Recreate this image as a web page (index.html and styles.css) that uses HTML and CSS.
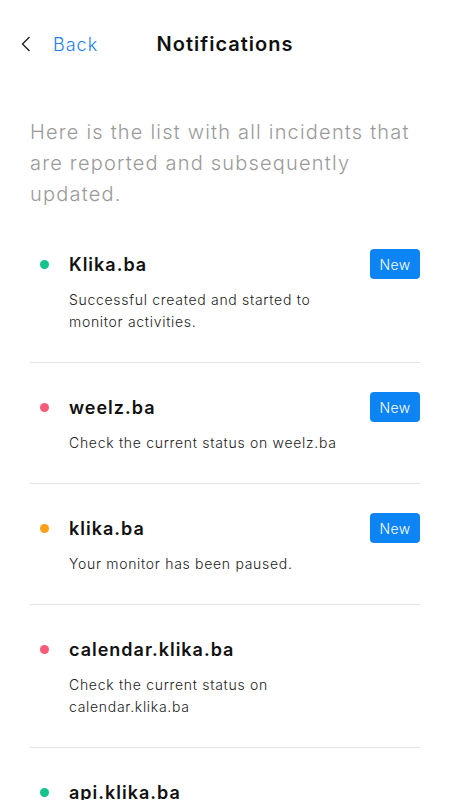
FILE: index.html
```html
<!DOCTYPE html>
<html lang="en">
<head>
<meta charset="utf-8">
<title>Notifications</title>
<link rel="stylesheet" href="styles.css">
</head>
<body>
<header class="topbar">
  <a class="back" href="#">
    <svg class="chev" width="10" height="16" viewBox="0 0 10 16"><path d="M8.5 1 L1.5 8 L8.5 15" fill="none" stroke="#222" stroke-width="1.4"/></svg>
    <span class="back-label">Back</span>
  </a>
  <h1 class="title">Notifications</h1>
  <span></span>
</header>
<p class="intro">Here is the list with all incidents that<br>are reported and subsequently<br>updated.</p>
<ul class="list">
  <li class="item">
    <div class="item-head"><span class="dot green"></span><span class="name">Klika.ba</span><span class="badge">New</span></div>
    <p class="desc">Successful created and started to<br>monitor activities.</p>
  </li>
  <li class="item">
    <div class="item-head"><span class="dot red"></span><span class="name">weelz.ba</span><span class="badge">New</span></div>
    <p class="desc">Check the current status on weelz.ba</p>
  </li>
  <li class="item">
    <div class="item-head"><span class="dot orange"></span><span class="name">klika.ba</span><span class="badge">New</span></div>
    <p class="desc">Your monitor has been paused.</p>
  </li>
  <li class="item">
    <div class="item-head"><span class="dot red"></span><span class="name">calendar.klika.ba</span></div>
    <p class="desc">Check the current status on<br>calendar.klika.ba</p>
  </li>
  <li class="item">
    <div class="item-head"><span class="dot green"></span><span class="name">api.klika.ba</span></div>
    <p class="desc">Check the current status on api.klika.ba</p>
  </li>
</ul>
</body>
</html>
```
FILE: styles.css
```css
* { box-sizing: border-box; }
html, body { margin: 0; padding: 0; background: #fff; }
body {
  font-family: Inter, "Open Sans", "DejaVu Sans", sans-serif;
  color: #111;
  width: 450px;
  height: 800px;
  overflow: hidden;
}
.topbar {
  height: 88px;
  display: grid;
  grid-template-columns: 1fr auto 1fr;
  align-items: center;
}
.back {
  display: flex;
  align-items: center;
  text-decoration: none;
  padding-left: 21px;
}
.chev { display: block; }
.back-label {
  margin-left: 22px;
  color: #1a80f2;
  font-size: 18px;
  font-weight: 300;
  letter-spacing: 1px;
}
.title {
  margin: 0;
  font-size: 20px;
  font-weight: 600;
  color: #111;
  letter-spacing: 1px;
}
.intro {
  margin: 29px 30px 0;
  font-size: 20px;
  line-height: 31px;
  font-weight: 300;
  color: #9a9a9a;
  letter-spacing: 1.2px;
  white-space: nowrap;
}
.list {
  list-style: none;
  margin: 10px 30px 0;
  padding: 0;
}
.item {
  padding: 29px 0 29px;
  border-bottom: 1px solid #e3e3e3;
}
.item-head {
  display: flex;
  align-items: center;
  height: 30px;
}
.dot {
  width: 9px;
  height: 9px;
  border-radius: 50%;
  margin-left: 10px;
  margin-right: 20px;
  flex: none;
}
.green { background: #12c48c; }
.red { background: #f75b78; }
.orange { background: #fca115; }
.name {
  flex: 1;
  font-size: 18px;
  font-weight: 600;
  color: #111;
  letter-spacing: 1px;
}
.badge {
  width: 50px;
  height: 30px;
  border-radius: 4px;
  background: #0c84f4;
  color: #fff;
  font-size: 14px;
  font-weight: 300;
  display: flex;
  align-items: center;
  justify-content: center;
  letter-spacing: 0.3px;
}
.desc {
  margin: 10px 0 0 39px;
  font-size: 14px;
  line-height: 22px;
  font-weight: 300;
  color: #222;
  letter-spacing: 0.7px;
  white-space: nowrap;
}
```
